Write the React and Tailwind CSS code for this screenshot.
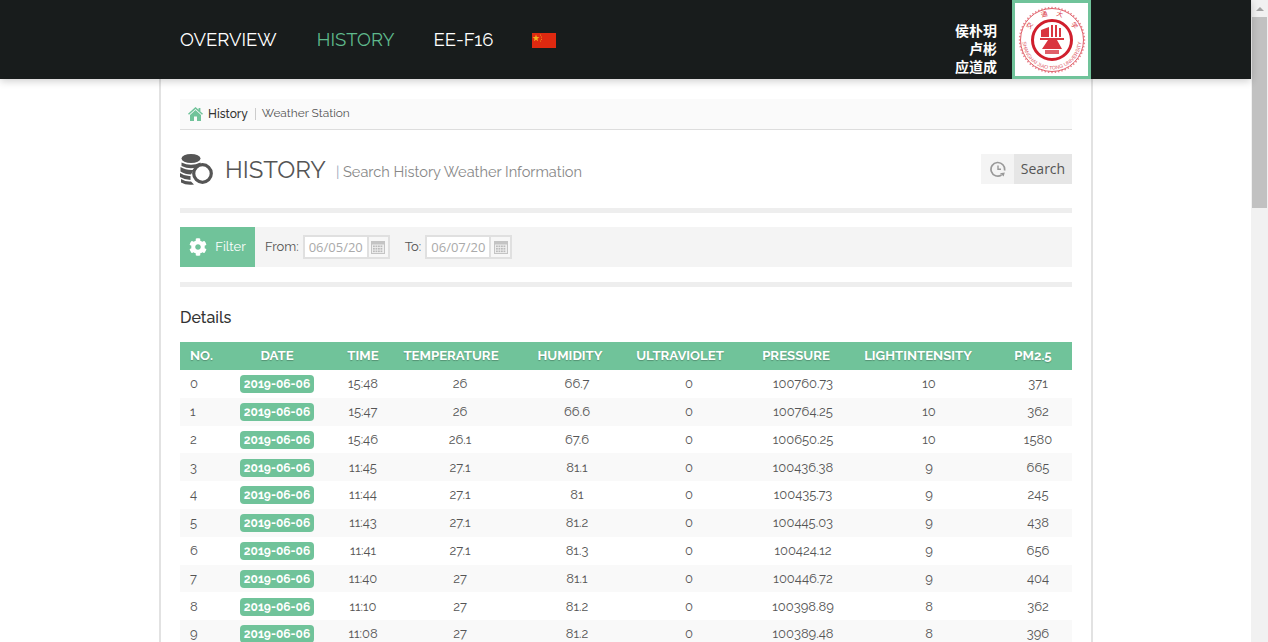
import React from 'react';
import { FaCog } from 'react-icons/fa';

const rows = [
  [0, '15:48', '26', '66.7', '0', '100760.73', '10', '371'],
  [1, '15:47', '26', '66.6', '0', '100764.25', '10', '362'],
  [2, '15:46', '26.1', '67.6', '0', '100650.25', '10', '1580'],
  [3, '11:45', '27.1', '81.1', '0', '100436.38', '9', '665'],
  [4, '11:44', '27.1', '81', '0', '100435.73', '9', '245'],
  [5, '11:43', '27.1', '81.2', '0', '100445.03', '9', '438'],
  [6, '11:41', '27.1', '81.3', '0', '100424.12', '9', '656'],
  [7, '11:40', '27', '81.1', '0', '100446.72', '9', '404'],
  [8, '11:10', '27', '81.2', '0', '100398.89', '8', '362'],
  [9, '11:08', '27', '81.2', '0', '100389.48', '8', '396'],
];

const Flag = () => (
  <svg className="mt-[2px]" width="24" height="15" viewBox="0 0 24 15">
    <rect width="24" height="15" fill="#de2910" />
    <polygon points="4,1.5 4.9,4.1 7.4,4.1 5.4,5.7 6.1,8.2 4,6.7 1.9,8.2 2.6,5.7 0.6,4.1 3.1,4.1" fill="#f0b020" />
    <circle cx="8.5" cy="2" r="0.5" fill="#f0b020" />
    <circle cx="9.5" cy="4" r="0.5" fill="#f0b020" />
    <circle cx="9.5" cy="6.2" r="0.5" fill="#f0b020" />
    <circle cx="8.5" cy="8" r="0.5" fill="#f0b020" />
  </svg>
);

const Home = () => (
  <svg className="mr-[5px]" width="15" height="14" viewBox="0 0 15 14" fill="#70c39a">
    <path d="M7.5 0 L10.6 2.8 V1 H12.4 V4.4 L15 6.8 L14 7.8 L7.5 1.9 L1 7.8 L0 6.8 Z" />
    <path d="M7.5 3 L13 8 V14 H9 V9.5 H6 V14 H2 V8 Z" />
  </svg>
);

const Logo = () => {
  const teeth = Array.from({ length: 60 }, (_, i) => i * 6);
  const chars = [['交', -57], ['通', -17], ['大', 17], ['学', 57]];
  return (
    <svg width="68" height="68" viewBox="0 0 68 68">
      <defs>
        <path id="sjtu-bottom" d="M4.5 34 A29.5 29.5 0 0 0 63.5 34" />
      </defs>
      {teeth.map((a) => (
        <rect key={a} x="33.3" y="0.8" width="1.4" height="1.6" fill="#e8838b" transform={`rotate(${a} 34 34)`} />
      ))}
      <circle cx="34" cy="34" r="31.5" fill="none" stroke="#e0606a" strokeWidth="1" />
      {chars.map(([c, a]) => (
        <text key={c} x="34" y="9.5" fontSize="6.5" textAnchor="middle" fill="#d9353f" fontFamily="'Noto Sans CJK SC', sans-serif" transform={`rotate(${a} 34 34)`}>{c}</text>
      ))}
      <text fontSize="5.2" fill="#e0606a" fontFamily="'Liberation Sans', sans-serif">
        <textPath href="#sjtu-bottom" startOffset="50%" textAnchor="middle">SHANGHAI JIAO TONG UNIVERSITY</textPath>
      </text>
      <circle cx="34" cy="34" r="19.5" fill="none" stroke="#d01f2d" strokeWidth="3" />
      <path d="M23 24 L31 21 V31 H23 Z M33 19 H35 V31 H33 Z M37 19 H39 V31 H37 Z M41 22 H43 V31 H41 Z" fill="#d9353f" />
      <path d="M22 32 H46 V34 H39 L44 43 H24 L30 34 H22 Z" fill="#d9353f" />
      <rect x="27" y="44" width="14" height="4" fill="#e0606a" />
    </svg>
  );
};

const Coins = () => (
  <svg width="33" height="31" viewBox="0 0 33 31">
    <g fill="#555">
      <ellipse cx="11" cy="4.5" rx="9.5" ry="4.5" />
      <path d="M1.5 8.5 Q11 13 20.5 8.5 V12 Q11 16.5 1.5 12 Z" />
      <path d="M0.5 13 Q6 16.5 13.5 16 L11 20.5 Q5 20.5 0.5 17.5 Z" />
      <path d="M0 19 Q5 22.5 10.5 22 L10.5 26 Q5 26 0 23 Z" />
      <path d="M1 25 Q6 28 11 27.5 L14 30.5 Q6 31.5 1 28.5 Z" />
    </g>
    <circle cx="22.5" cy="19.5" r="8.8" fill="#fff" stroke="#555" strokeWidth="3.2" />
  </svg>
);

const ClockBack = () => (
  <svg width="16" height="16" viewBox="0 0 16 16" fill="none" stroke="#999" strokeWidth="1.7">
    <path d="M14.5 9.5 A6.8 6.8 0 1 0 11.5 14" />
    <path d="M8 4.5 V8.3 H11" strokeWidth="1.4" />
    <path d="M10 12.2 L14.8 11.4 L13.6 15.4 Z" fill="#999" stroke="none" />
  </svg>
);

const Calendar = () => (
  <svg width="14" height="14" viewBox="0 0 14 14">
    <rect x="0" y="1" width="14" height="13" fill="#c4c4c4" />
    <rect x="1" y="4.5" width="12" height="8.5" fill="#eee" />
    {[2, 4.5, 7, 9.5].map((x) =>
      [5.5, 8, 10.5].map((y) => <rect key={`${x}-${y}`} x={x} y={y} width="1.8" height="1.6" fill="#bbb" />)
    )}
  </svg>
);

const DateInput = ({ value }) => (
  <div className="flex h-[24px] w-[87px] border-2 border-[#e0e0e0] bg-white">
    <div className="w-[62px] pl-[4px] font-['Open_Sans',sans-serif] text-[13px] leading-[20px] whitespace-nowrap text-[#aaa]">{value}</div>
    <div className="flex flex-1 items-center justify-center border-l-2 border-[#e0e0e0] bg-[#f7f7f7]">
      <Calendar />
    </div>
  </div>
);

const App = () => {
  const tdClass = 'text-center font-normal';
  return (
    <div className="flex h-screen overflow-hidden bg-white font-['Raleway','Lato',sans-serif] text-[#555]">
      <div className="flex min-w-0 flex-1 flex-col">
        {/* top nav */}
        <div className="relative z-10 flex h-[79px] shrink-0 items-center bg-[#181c1c] pl-[180px] shadow-[0_2px_8px_rgba(0,0,0,0.2)]">
          <a className="mr-[40px] text-[18.5px] text-white">OVERVIEW</a>
          <a className="mr-[39px] text-[18.5px] text-[#5fb98c]">HISTORY</a>
          <a className="mr-[39px] text-[18.5px] text-white">EE-F16</a>
          <Flag />
          <div className="mt-[16px] ml-auto mr-[15px] text-right font-['Noto_Sans_CJK_SC',sans-serif] text-[14px] leading-[18px] font-bold text-white">
            <div>侯朴玥</div>
            <div>卢彬</div>
            <div>应道成</div>
          </div>
          <div className="mr-[160px] flex h-[79px] w-[79px] items-center justify-center border-[3px] border-[#70c39a] bg-white">
            <Logo />
          </div>
        </div>

        <div className="ml-[159px] h-full w-[934px] border-x-2 border-[#e2e2e2] px-[19px] pt-[20px]">
          {/* breadcrumb */}
          <div className="flex h-[31px] items-center border-b border-[#dddddd] bg-[#fafafa] pl-[8px] text-[12px]">
            <Home />
            <span className="font-medium text-[#333]">History</span>
            <span className="ml-[7px] mr-[6px] h-[12px] w-px bg-[#ccc]" />
            <span className="text-[11.9px] text-[#555]">Weather Station</span>
          </div>

          {/* page title */}
          <div className="flex h-[78px] items-center">
            <Coins />
            <h1 className="ml-[12px] mt-[2px] text-[24px] text-[#555]">HISTORY</h1>
            <span className="ml-[10px] mt-[5px] text-[14.6px] text-[#888]"><span className="text-[#9ab]">|</span> Search History Weather Information</span>
            <div className="ml-auto flex h-[30px] font-['Open_Sans',sans-serif] text-[14px] leading-[30px] text-[#555]">
              <div className="flex w-[33px] items-center justify-center bg-[#f4f4f4]"><ClockBack /></div>
              <div className="w-[58px] bg-[#e6e6e6] text-center">Search</div>
            </div>
          </div>
          <div className="h-[5px] bg-[#eeeeee]" />

          {/* filter bar */}
          <div className="mt-[14px] flex h-[40px] items-center bg-[#f4f4f4] text-[13px]">
            <div className="flex h-full w-[75px] items-center justify-center gap-[8px] bg-[#70c39a] text-white">
              <FaCog className="text-[18px]" />
              <span>Filter</span>
            </div>
            <span className="ml-[10px] mr-[4px]">From:</span>
            <DateInput value="06/05/20" />
            <span className="ml-[15px] mr-[4px]">To:</span>
            <DateInput value="06/07/20" />
          </div>
          <div className="mt-[15px] h-[5px] bg-[#eeeeee]" />

          <h2 className="mt-[21px] h-[34px] text-[16px] leading-[20px] font-medium text-[#333]">Details</h2>

          {/* data table */}
          <table className="w-[892px] table-fixed border-collapse text-[13px]">
            <colgroup>
              <col className="w-[42px]" />
              <col className="w-[110px]" />
              <col className="w-[62px]" />
              <col className="w-[114px]" />
              <col className="w-[124px]" />
              <col className="w-[96px]" />
              <col className="w-[136px]" />
              <col className="w-[108px]" />
              <col className="w-[100px]" />
            </colgroup>
            <thead>
              <tr className="h-[28px] bg-[#70c39a] text-[13.2px] font-bold whitespace-nowrap text-white [text-shadow:0_1px_1px_rgba(0,0,0,0.25)] [&>th]:text-center">
                <th className="pl-[10px] !text-left">NO.</th>
                <th>DATE</th>
                <th>TIME</th>
                <th>TEMPERATURE</th>
                <th>HUMIDITY</th>
                <th>ULTRAVIOLET</th>
                <th>PRESSURE</th>
                <th>LIGHTINTENSITY</th>
                <th className="pl-[22px]">PM2.5</th>
              </tr>
            </thead>
            <tbody>
              {rows.map((r) => (
                <tr key={r[0]} className={`h-[27.8px] ${r[0] % 2 === 1 ? 'bg-[#f9f9f9]' : 'bg-white'}`}>
                  <td className="pl-[10px] text-left">{r[0]}</td>
                  <td className={tdClass}>
                    <span className="inline-block h-[18px] w-[74px] rounded-[4px] bg-[#70c39a] text-[12px] leading-[18px] font-bold text-white">2019-06-06</span>
                  </td>
                  <td className={tdClass}>{r[1]}</td>
                  <td className={`${tdClass} pl-[18px]`}>{r[2]}</td>
                  <td className={`${tdClass} pl-[14px]`}>{r[3]}</td>
                  <td className={`${tdClass} pl-[18px]`}>{r[4]}</td>
                  <td className={`${tdClass} pl-[14px]`}>{r[5]}</td>
                  <td className={`${tdClass} pl-[22px]`}>{r[6]}</td>
                  <td className={`${tdClass} pl-[32px]`}>{r[7]}</td>
                </tr>
              ))}
            </tbody>
          </table>
        </div>
      </div>

      {/* scrollbar */}
      <div className="flex h-full w-[17px] shrink-0 flex-col bg-[#f1f1f1]">
        <div className="flex h-[17px] items-center justify-center">
          <div className="h-0 w-0 border-x-[4px] border-b-[4px] border-x-transparent border-b-[#a3a3a3]" />
        </div>
        <div className="mx-px h-[191px] bg-[#c1c1c1]" />
      </div>
    </div>
  );
};

export default App;
